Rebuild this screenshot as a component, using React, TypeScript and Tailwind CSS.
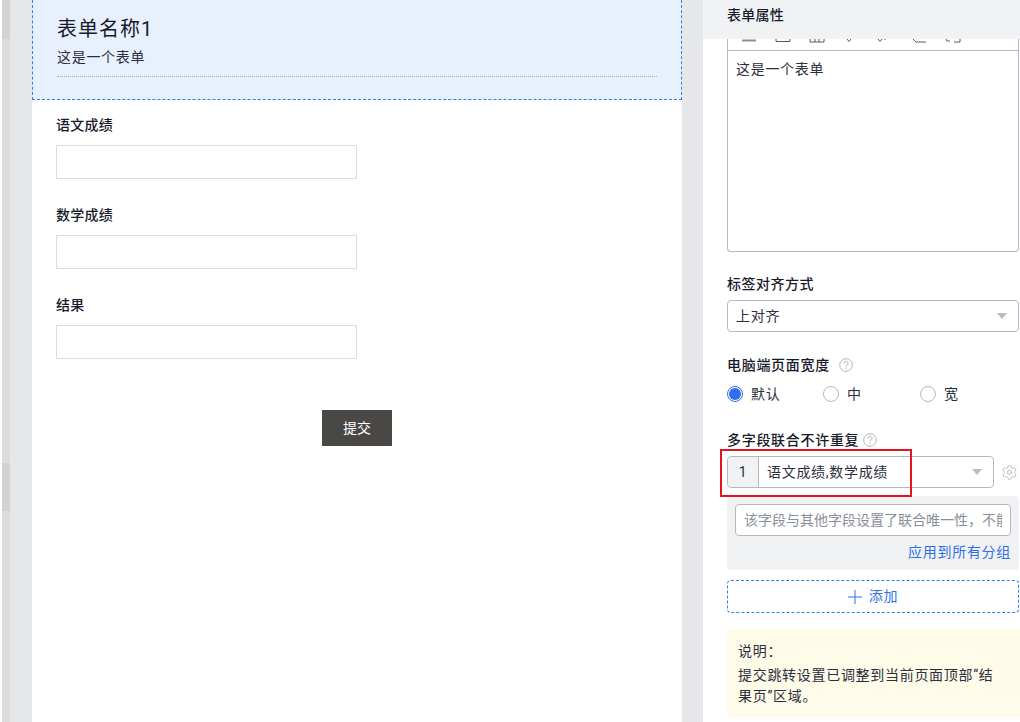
import { Settings } from "lucide-react";

const FONT = "font-['Roboto','Noto_Sans_CJK_SC',sans-serif]";

function Field({ label }: { label: string }) {
  return (
    <div className="h-[90px] pt-[15px]">
      <div className="text-[14px] leading-5 font-medium tracking-[0.25px] text-[#171a2b]">{label}</div>
      <div className="mt-[10px] h-[34px] w-[301px] border border-[#dcdcdc] bg-white" />
    </div>
  );
}

function Help() {
  return (
    <svg viewBox="0 0 14 14" className="w-[14px] h-[14px]" fill="none" stroke="#a9adb5" strokeWidth="0.9">
      <circle cx="7" cy="7" r="6.3" />
      <path d="M4.9 5.4a2.1 2.1 0 1 1 3.1 1.8c-.7.4-1 .8-1 1.5" />
      <path d="M7 9.8v1.2" />
    </svg>
  );
}

function Arrow() {
  return <span className="w-0 h-0 border-x-[5px] border-x-transparent border-t-[6px] border-t-[#b8bcc4]" />;
}

function Radio({ label, on, width }: { label: string; on?: boolean; width: string }) {
  return (
    <div className={`flex items-center gap-2 ${width}`}>
      {on ? (
        <span className="w-4 h-4 rounded-full border border-[#2f6fed] flex items-center justify-center">
          <span className="w-3 h-3 rounded-full bg-[#2f6fed]" />
        </span>
      ) : (
        <span className="w-4 h-4 rounded-full border border-[#b4b8c0]" />
      )}
      <span className="text-[14px] leading-5 text-[#2b2f3d]">{label}</span>
    </div>
  );
}

export default function App() {
  return (
    <div className={`relative h-[722px] w-[1020px] overflow-hidden bg-white flex tracking-[0.7px] ${FONT}`}>
      <div className="w-[2px] bg-white" />
      <div className="w-[8px] flex flex-col bg-[#dbdcdc]">
        <div className="h-[39px] bg-[#d2d4d3]" />
        <div className="h-[424px]" />
        <div className="h-[48px] bg-[#d0d3d1]" />
      </div>
      <div className="w-[22px] bg-[#e5e7eb]" />

      <main className="w-[650px] bg-white">
        <div className="h-[100px] bg-[#e8f0fe] border-x border-b border-dashed border-[#2b7fff] px-6 pt-[14px]">
          <div className="text-[20px] leading-[30px] tracking-[1px] text-[#171a2b]">表单名称1</div>
          <div className="mt-[2px] text-[14px] leading-[22px] text-[#2b2f3d]">这是一个表单</div>
          <div className="mt-[8px] border-b border-dotted border-[#a9adb5]" />
        </div>
        <div className="px-6">
          <Field label="语文成绩" />
          <Field label="数学成绩" />
          <Field label="结果" />
          <div className="mt-[40px] flex justify-center">
            <button className="w-[70px] h-[36px] bg-[#4a4845] text-white text-[14px] tracking-normal">提交</button>
          </div>
        </div>
      </main>

      <div className="w-[21px] bg-[#e5e7eb]" />

      <aside className="w-[317px] bg-white">
        <div className="h-[39px] bg-[#f1f2f4] pl-6 text-[14px] font-medium tracking-[0.25px] leading-[31px] text-[#171a2b]">表单属性</div>
        <div className="pl-6">
          <div className="w-[292px] h-[213px] border border-t-0 border-[#b4b8c0] rounded-b">
            <div className="h-[12px] border-b border-[#b4b8c0]">
              <svg viewBox="0 0 290 6" className="w-[290px] h-[6px]" fill="none" stroke="#565b6b" strokeWidth="1">
                <path d="M14 1.5h14" strokeWidth="2" stroke="#8a8e99" />
                <path d="M48 0v2.5h14V0" />
                <path d="M82 0v3h14V0M87 0v3M91 0v3" />
                <path d="M119 0l2 2.5 2-2.5" />
                <path d="M150 0l2 2.5 2-2.5M157 0v1" />
                <path d="M185 0l3 3h10" />
                <path d="M218 0l1 2h3M226 3h6V0" />
              </svg>
            </div>
            <div className="px-2 pt-2 text-[14px] leading-5 text-[#2b2f3d]">这是一个表单</div>
          </div>

          <div className="mt-[22px] text-[14px] leading-5 font-medium text-[#171a2b] tracking-[0.5px]">标签对齐方式</div>
          <div className="mt-[6px] w-[292px] h-[32px] border border-[#b4b8c0] rounded flex items-center justify-between pl-2 pr-[11px]">
            <span className="text-[14px] text-[#2b2f3d]">上对齐</span>
            <Arrow />
          </div>

          <div className="mt-[23px] flex items-center gap-[9px] text-[14px] leading-5 font-medium text-[#171a2b]">
            电脑端页面宽度 <Help />
          </div>
          <div className="mt-[9px] flex">
            <Radio label="默认" on width="w-[96px]" />
            <Radio label="中" width="w-[97px]" />
            <Radio label="宽" width="w-[80px]" />
          </div>

          <div className="mt-[26px] flex items-center gap-[4px] text-[14px] leading-5 font-medium text-[#171a2b]">
            多字段联合不许重复 <Help />
          </div>
          <div className="mt-[6px] flex items-center">
            <div className="w-[267px] h-[32px] border border-[#b4b8c0] rounded flex items-center">
              <span className="w-[31px] h-full bg-[#f1f2f4] border-r border-[#b4b8c0] rounded-l flex items-center justify-center text-[14px] text-[#2b2f3d]">1</span>
              <span className="flex-1 pl-2 text-[14px] text-[#2b2f3d]">语文成绩,数学成绩</span>
              <span className="mr-[11px] flex"><Arrow /></span>
            </div>
            <Settings className="ml-[7px] w-[17px] h-[17px] text-[#a4a8b0]" strokeWidth={1.1} />
          </div>
          <div className="mt-[8px] w-[292px] h-[74px] bg-[#f1f2f4] rounded px-2 pt-2">
            <div className="h-[32px] bg-white border border-[#b4b8c0] rounded px-2 flex items-center overflow-hidden">
              <span className="text-[14px] tracking-normal text-[#8a8e99] whitespace-nowrap overflow-hidden">该字段与其他字段设置了联合唯一性，不能重复</span>
            </div>
            <div className="mt-[6px] text-right text-[14px] leading-5 text-[#2f6fed]">应用到所有分组</div>
          </div>
          <div className="mt-[10px] w-[292px] h-[33px] border border-dashed border-[#2b7fff] rounded flex items-center justify-center gap-[7px] text-[14px] text-[#2f6fed]">
            <svg viewBox="0 0 14 14" className="w-[14px] h-[14px]" fill="none" stroke="#2f6fed" strokeWidth="1"><path d="M7 0v14M0 7h14" /></svg>
            添加
          </div>
          <div className="mt-[16px] w-[293px] h-[88px] bg-[#fefbe9] pl-[11px] pr-[22px] pt-[12px] text-[14px] leading-[21px] text-[#2b2f3d]">
            <div>说明：</div>
            <div className="mt-[3px]">提交跳转设置已调整到当前页面顶部“结果页”区域。</div>
          </div>
        </div>
      </aside>

      <div className="absolute left-[720px] top-[449px] w-[192px] h-[48px] border-2 border-[#e3141f]" />
    </div>
  );
}
